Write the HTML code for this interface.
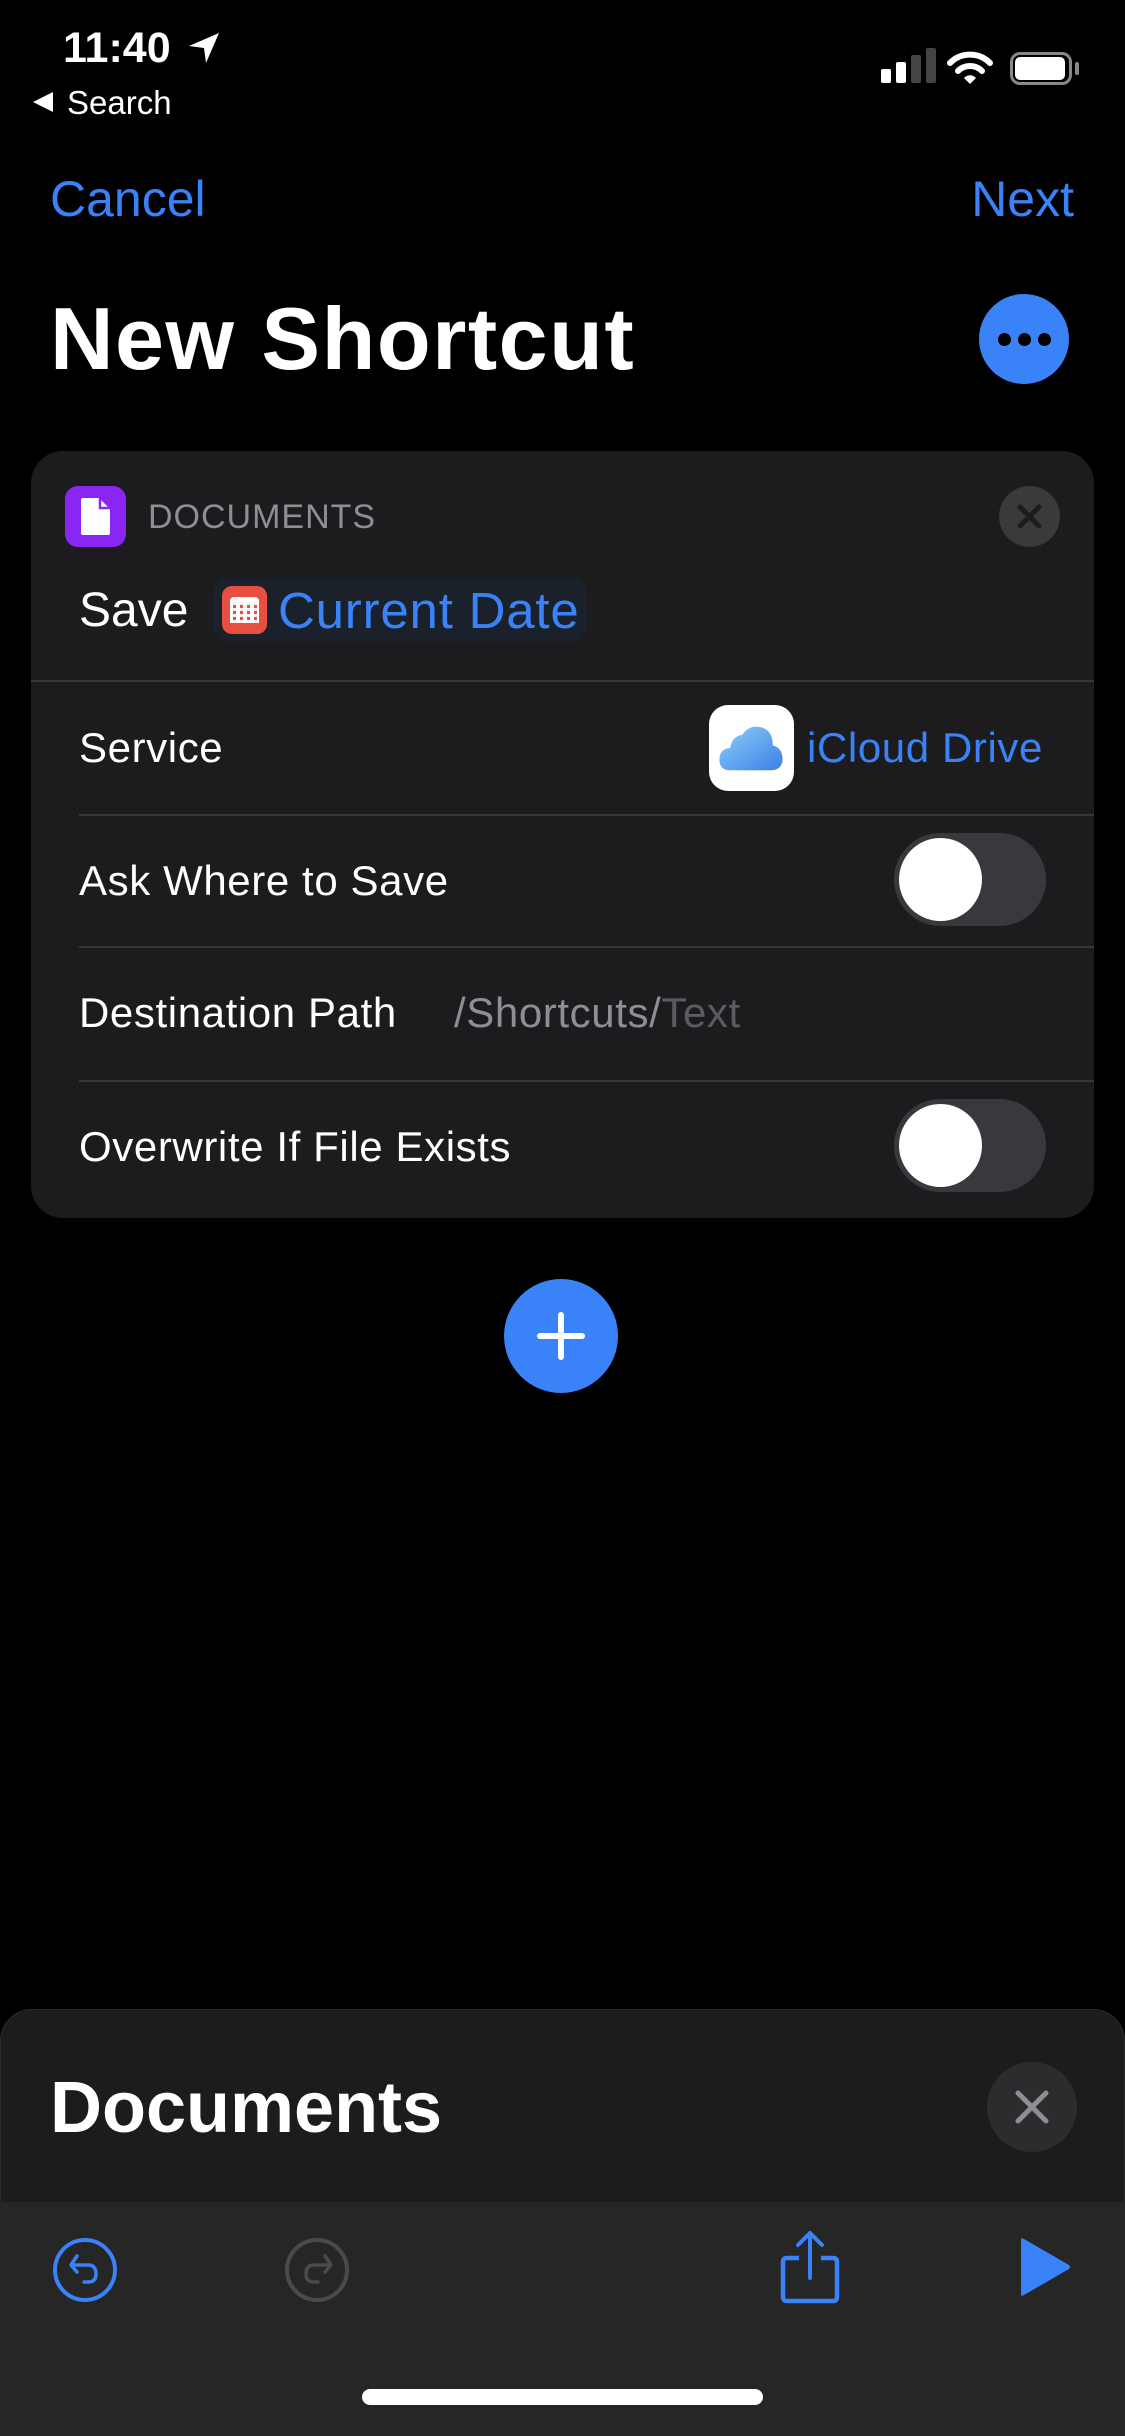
<!DOCTYPE html>
<html><head><meta charset="utf-8"><style>
*{margin:0;padding:0;box-sizing:border-box}
body{width:1125px;height:2436px;background:#000;position:relative;overflow:hidden;font-family:"Liberation Sans",sans-serif;color:#fff}
.a{position:absolute;white-space:nowrap;line-height:1}
.blue{color:#3a82f7}
.sep{position:absolute;height:2px;background:#38383a}
.tog{position:absolute;left:894px;width:152px;height:93px;border-radius:47px;background:#39393d}
.tog::after{content:"";position:absolute;left:5px;top:5px;width:83px;height:83px;border-radius:50%;background:#fff}
.row{font-size:42px;letter-spacing:0.6px}
</style></head><body>
<div class="a" style="left:63px;top:27px;font-size:43px;font-weight:bold">11:40</div>
<svg class="a" style="left:188px;top:32px" width="32" height="32" viewBox="0 0 32 32"><path d="M31 1 L1 14 L16 16 L18 31 Z" fill="#fff"/></svg>
<svg class="a" style="left:32px;top:91px" width="22" height="22" viewBox="0 0 22 22"><path d="M21 1 L1 11 L21 21 Z" fill="#fff"/></svg>
<div class="a" style="left:67px;top:86px;font-size:33px">Search</div>
<div class="a" style="left:881px;top:69px;width:10px;height:14px;background:#fff;border-radius:2px"></div>
<div class="a" style="left:896px;top:62px;width:10px;height:21px;background:#fff;border-radius:2px"></div>
<div class="a" style="left:911px;top:55px;width:10px;height:28px;background:#444;border-radius:2px"></div>
<div class="a" style="left:926px;top:48px;width:10px;height:35px;background:#444;border-radius:2px"></div>
<svg class="a" style="left:947px;top:50px" width="46" height="36" viewBox="0 0 46 36"><path d="M3 13 A28 28 0 0 1 43 13" stroke="#fff" stroke-width="6" fill="none" stroke-linecap="round"/><path d="M11 21 A17 17 0 0 1 35 21" stroke="#fff" stroke-width="6" fill="none" stroke-linecap="round"/><path d="M17 28 L23 34 L29 28 A8 8 0 0 0 17 28Z" fill="#fff"/></svg>
<div class="a" style="left:1010px;top:52px;width:62px;height:33px;border:3px solid #888;border-radius:10px"></div>
<div class="a" style="left:1015px;top:57px;width:50px;height:23px;background:#fff;border-radius:5px"></div>
<div class="a" style="left:1075px;top:62px;width:4px;height:13px;background:#888;border-radius:2px"></div>

<div class="a blue" style="left:50px;top:174px;font-size:50px">Cancel</div>
<div class="a blue" style="right:51px;top:174px;font-size:50px">Next</div>
<div class="a" style="left:50px;top:295px;font-size:88px;font-weight:bold;letter-spacing:1.5px">New Shortcut</div>
<div class="a" style="left:979px;top:294px;width:90px;height:90px;border-radius:50%;background:#3a82f7"></div>
<div class="a" style="left:998px;top:333px;width:13px;height:13px;border-radius:50%;background:#000"></div>
<div class="a" style="left:1018px;top:333px;width:13px;height:13px;border-radius:50%;background:#000"></div>
<div class="a" style="left:1038px;top:333px;width:13px;height:13px;border-radius:50%;background:#000"></div>

<div class="a" style="left:31px;top:451px;width:1063px;height:767px;border-radius:32px;background:#1c1c1e"></div>
<div class="a" style="left:65px;top:486px;width:61px;height:61px;border-radius:13px;background:#8a26f4"></div>
<svg class="a" style="left:80px;top:497px" width="31" height="39" viewBox="0 0 31 39"><path d="M3 1 H19 L30 12 V36 Q30 38 28 38 H3 Q1 38 1 36 V3 Q1 1 3 1Z" fill="#fff"/><path d="M20 1 V11 H30" stroke="#8a26f4" stroke-width="2.5" fill="none"/></svg>
<div class="a" style="left:148px;top:500px;font-size:34px;color:#8e8e93;letter-spacing:1px">DOCUMENTS</div>
<div class="a" style="left:999px;top:486px;width:61px;height:61px;border-radius:50%;background:#3a3a3c"></div>
<svg class="a" style="left:1015px;top:502px" width="29" height="29" viewBox="0 0 29 29"><path d="M5 5 L24 24 M24 5 L5 24" stroke="#1c1c1e" stroke-width="5" stroke-linecap="round"/></svg>
<div class="a" style="left:79px;top:587px;font-size:48px">Save</div>
<div class="a" style="left:213px;top:578px;width:374px;height:64px;border-radius:16px;background:#1b212b"></div>
<div class="a" style="left:222px;top:586px;width:45px;height:48px;border-radius:10px;background:#e94f40"></div>
<div class="a" style="left:230px;top:597px;width:29px;height:26px;border-radius:4px;background:#fff"></div>
<div class="a" style="left:230px;top:602px;width:29px;height:21px;background:repeating-linear-gradient(90deg,#fff 0 3px,#e94f40 3px 6px,#fff 6px 7px)"></div>
<div class="a" style="left:230px;top:602px;width:29px;height:21px;background:repeating-linear-gradient(0deg,#fff 0 3px,transparent 3px 6px);opacity:.9"></div>
<div class="a blue" style="left:278px;top:585px;font-size:51px;letter-spacing:0.8px">Current Date</div>
<div class="sep" style="left:31px;top:680px;width:1063px"></div>

<div class="a row" style="left:79px;top:727px">Service</div>
<div class="a" style="left:709px;top:705px;width:85px;height:86px;border-radius:19px;background:#fff"></div>
<svg class="a" style="left:716px;top:724px" width="70" height="48" viewBox="0 0 75 54"><defs><linearGradient id="g" x1="0" x2="1" y1="0" y2="1"><stop offset="0" stop-color="#8fd0fa"/><stop offset="1" stop-color="#3a7fe6"/></linearGradient></defs><path d="M14 52 Q2 52 2 40 Q2 28 14 27 Q16 14 28 12 Q36 0 50 4 Q62 8 62 24 Q73 27 73 40 Q72 52 60 52Z" fill="url(#g)"/></svg>
<div class="a blue row" style="right:82px;top:727px">iCloud Drive</div>
<div class="sep" style="left:79px;top:814px;width:1015px"></div>

<div class="a row" style="left:79px;top:860px">Ask Where to Save</div>
<div class="tog" style="top:833px"></div>
<div class="sep" style="left:79px;top:946px;width:1015px"></div>

<div class="a row" style="left:79px;top:992px">Destination Path</div>
<div class="a row" style="left:454px;top:992px;color:#8e8e93">/Shortcuts/<span style="color:#5c5c60">Text</span></div>
<div class="sep" style="left:79px;top:1080px;width:1015px"></div>

<div class="a row" style="left:79px;top:1126px">Overwrite If File Exists</div>
<div class="tog" style="top:1099px"></div>

<div class="a" style="left:504px;top:1279px;width:114px;height:114px;border-radius:50%;background:#3a82f7"></div>
<div class="a" style="left:537px;top:1333px;width:48px;height:6px;background:#fff;border-radius:3px"></div>
<div class="a" style="left:558px;top:1312px;width:6px;height:48px;background:#fff;border-radius:3px"></div>

<div class="a" style="left:0;top:2009px;width:1125px;height:427px;border-radius:32px 32px 0 0;background:#1c1c1e;border:1px solid #2a2a2c"></div>
<div class="a" style="left:50px;top:2072px;font-size:72px;font-weight:bold">Documents</div>
<div class="a" style="left:987px;top:2062px;width:90px;height:90px;border-radius:50%;background:#2c2c2e"></div>
<svg class="a" style="left:1012px;top:2087px" width="40" height="40" viewBox="0 0 40 40"><path d="M6 6 L34 34 M34 6 L6 34" stroke="#8e8e93" stroke-width="5" stroke-linecap="round"/></svg>
<div class="a" style="left:0;top:2202px;width:1125px;height:234px;background:#262626"></div>
<svg class="a" style="left:52px;top:2237px" width="66" height="66" viewBox="0 0 66 66"><circle cx="33" cy="33" r="30" stroke="#3a82f7" stroke-width="4" fill="none"/><path d="M25 19 L19 28 L25 35 M20 28 H36 Q44 28 44 37 Q44 45 36 45 H32" stroke="#3a82f7" stroke-width="3.5" fill="none" stroke-linecap="round" stroke-linejoin="round"/></svg>
<svg class="a" style="left:284px;top:2237px" width="66" height="66" viewBox="0 0 66 66"><circle cx="33" cy="33" r="30" stroke="#4a4a4c" stroke-width="4" fill="none"/><path d="M41 19 L47 28 L41 35 M46 28 H30 Q22 28 22 37 Q22 45 30 45 H34" stroke="#4a4a4c" stroke-width="3.5" fill="none" stroke-linecap="round" stroke-linejoin="round"/></svg>
<svg class="a" style="left:780px;top:2230px" width="60" height="74" viewBox="0 0 60 74"><path d="M19 28 H7 Q3 28 3 32 V67 Q3 71 7 71 H53 Q57 71 57 67 V32 Q57 28 53 28 H41" stroke="#3a82f7" stroke-width="4.5" fill="none"/><path d="M30 3 V48 M18 15 L30 3 L42 15" stroke="#3a82f7" stroke-width="4" fill="none" stroke-linecap="round" stroke-linejoin="round"/></svg>
<svg class="a" style="left:1018px;top:2236px" width="54" height="62" viewBox="0 0 54 62"><path d="M3 4 Q3 1 6 3 L51 29 Q53 31 51 33 L6 59 Q3 61 3 58Z" fill="#3a82f7"/></svg>
<div class="a" style="left:362px;top:2389px;width:401px;height:16px;border-radius:8px;background:#fff"></div>
</body></html>
